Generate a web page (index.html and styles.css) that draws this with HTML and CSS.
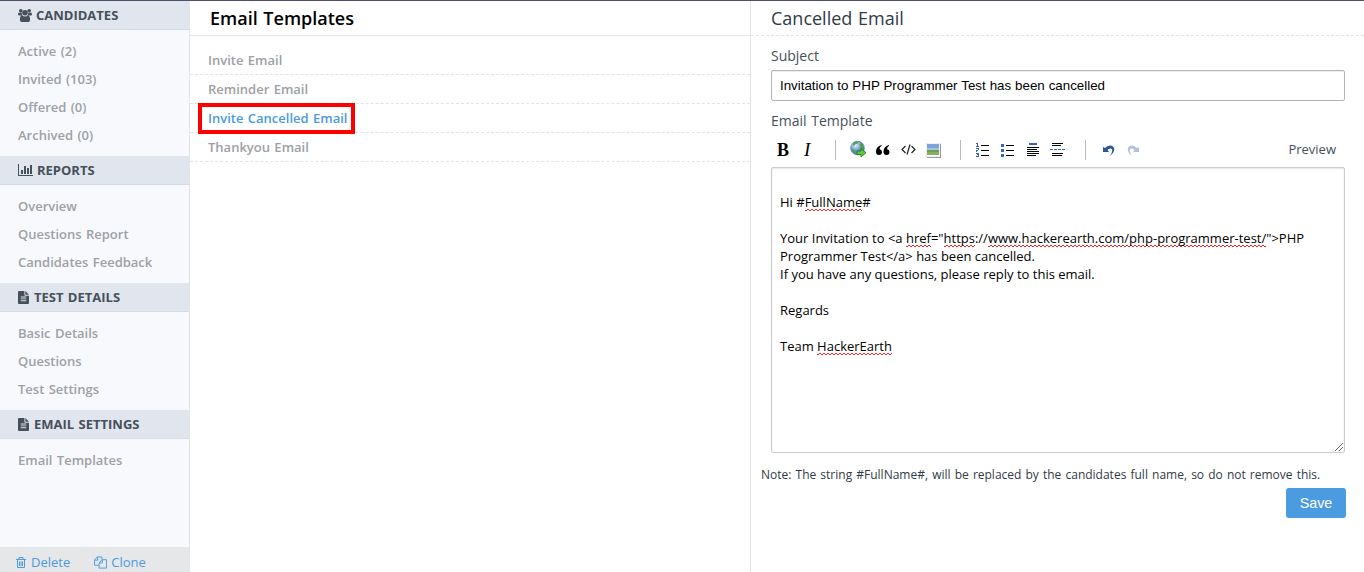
FILE: index.html
```html
<!DOCTYPE html>
<html lang="en">
<head>
<meta charset="utf-8">
<title>Email Templates</title>
<link rel="stylesheet" href="styles.css">
</head>
<body>
<svg class="defs" width="0" height="0" aria-hidden="true">
  <symbol id="file" viewBox="0 0 12 14"><path fill="currentColor" fill-rule="evenodd" d="M0 1Q0 0 1 0H7V4Q7 5 8 5H12V13Q12 14 11 14H1Q0 14 0 13ZM8 0L12 4H8ZM3 6V7H9V6ZM3 8V9H9V8ZM3 10V11H9V10Z"/></symbol>
</svg>
<div class="app">
  <aside class="sidebar">
    <h3 class="group"><svg class="ico-users" width="14" height="13" viewBox="0 0 15 14" fill="currentColor"><circle cx="3" cy="2" r="2"/><circle cx="12" cy="2" r="2"/><circle cx="7.5" cy="4" r="3"/><path d="M0 6Q0 3.8 1 3.8Q2.5 4.8 4 4.2Q4 6 5 7H1.2Q0 7 0 6ZM15 6Q15 3.8 14 3.8Q12.500 4.800 11 4.200Q11 6 10 7H13.800Q15 7 15 6ZM2 11.500Q2 7 4.500 7Q7.500 9.400 10.500 7Q13 7 13 11.500Q13 14 11 14H4Q2 14 2 11.500Z"/></svg><span>CANDIDATES</span></h3>
    <nav class="links"><a>Active (2)</a><a>Invited (103)</a><a>Offered (0)</a><a>Archived (0)</a></nav>
    <h3 class="group"><svg class="ico-chart" width="15" height="12" viewBox="0 0 15 12" fill="currentColor"><path d="M0 0H1V11H15V12H0ZM3 6H5V10H3ZM6 2H8V10H6ZM9 4H11V10H9ZM12 1H14V10H12Z"/></svg><span>REPORTS</span></h3>
    <nav class="links"><a>Overview</a><a>Questions Report</a><a>Candidates Feedback</a></nav>
    <h3 class="group"><svg class="ico-file" width="11" height="13"><use href="#file"/></svg><span>TEST DETAILS</span></h3>
    <nav class="links"><a>Basic Details</a><a>Questions</a><a>Test Settings</a></nav>
    <h3 class="group"><svg class="ico-file" width="11" height="13"><use href="#file"/></svg><span>EMAIL SETTINGS</span></h3>
    <nav class="links"><a>Email Templates</a></nav>
    <footer class="actions">
      <a><svg width="10" height="11" viewBox="0 0 10 11" fill="none" stroke="currentColor"><path d="M0 2.500H10M3 2V.5H7V2M1.500 3V10.500H8.500V3M3.500 4.500V9M5 4.500V9M6.500 4.500V9"/></svg><span>Delete</span></a>
      <a><svg width="13" height="13" viewBox="0 0 14 13" fill="none" stroke="currentColor"><path d="M5.500 9.500H.5V4L3.500.5H8.500V3M4 .5V4H.5M5.500 7L8.500 3.500H13.500V12.500H5.500ZM9 3.500V7H5.500"/></svg><span>Clone</span></a>
    </footer>
  </aside>
  <main class="templates">
    <h1>Email Templates</h1>
    <ul><li>Invite Email</li><li>Reminder Email</li><li class="current"><span>Invite Cancelled Email</span></li><li>Thankyou Email</li></ul>
  </main>
  <section class="editor">
    <h2>Cancelled Email</h2>
    <div class="form">
      <label class="subject">Subject</label>
      <div class="input">Invitation to PHP Programmer Test has been cancelled</div>
      <label class="template">Email Template</label>
      <div class="toolbar">
        <b class="bold">B</b><i class="italic">I</i><span class="sep s1"></span>
        <svg class="globe" width="17" height="17" viewBox="0 0 17 17"><defs><radialGradient id="g" cx=".35" cy=".3"><stop stop-color="#e5f2ff"/><stop offset="1" stop-color="#4f83bd"/></radialGradient></defs><circle cx="7.500" cy="7" r="6.800" fill="url(#g)" stroke="#4e7fae" stroke-width=".8"/><path fill="#4ca53a" d="M3 2.500Q5 0 8 .8L7.500 2.500L5 3.500L3.500 5.500ZM10 3L12 2.500L14 6L13 8L10.500 6.500ZM2 8L5 9L6 12L4 12Z"/><path fill="#62c43b" stroke="#267a1e" stroke-width=".9" d="M7 10H11V7.500L16 11.700L11 16V13.500H7Z"/></svg>
        <svg class="quote" width="14" height="10" viewBox="0 0 14 10"><path d="M5.500 0Q0 1.500 0 6.500Q0 10 3 10Q6 10 6 7Q6 4.500 3.500 4.300Q3.300 2 5.700.7Z"/><path transform="translate(7.500)" d="M5.500 0Q0 1.500 0 6.500Q0 10 3 10Q6 10 6 7Q6 4.500 3.500 4.300Q3.300 2 5.700.7Z"/></svg>
        <svg class="code" width="15" height="11" viewBox="0 0 15 11" fill="none" stroke="#222" stroke-width="1.200"><path d="M4.500 2L1 5.500L4.500 9M10.500 2L14 5.500L10.500 9M9 .5L6 10.500"/></svg>
        <svg class="image" width="15" height="15" viewBox="0 0 15 15"><path fill="#888" d="M1 1H15V15H1Z"/><path fill="#fff" stroke="#ccc" stroke-width=".5" d="M.2.2H14V14H.2Z"/><path fill="#7ca4dc" d="M1 1H13V7H1Z"/><path fill="#a9c6d9" d="M1 5H13V7H1Z"/><path fill="#84b062" d="M1 7H13V12H1Z"/><path fill="#6f9d58" d="M1 7H13V9H1Z"/></svg>
        <span class="sep s2"></span>
        <svg class="ol" width="14" height="15" viewBox="0 0 14 15" shape-rendering="crispEdges"><path d="M5 2H13V3H5ZM5 7H13V8H5ZM5 12H13V13H5Z"/><path fill="#3465c0" d="M0 0H2V3H3V4H0V3H1V1H0ZM0 5H3V7H2V8H1V8.500H3V9H0V7H1V7H2V6H0ZM0 10H3V14H0V13H2V12H1V11H0Z"/></svg>
        <svg class="ulist" width="13" height="13" viewBox="0 0 13 13" shape-rendering="crispEdges"><path d="M5 1H13V2H5ZM5 6H13V7H5ZM5 11H13V12H5Z"/><path fill="#3465c0" d="M0 0H3V3H0ZM0 5H3V8H0ZM0 10H3V13H0Z"/></svg>
        <svg class="head" width="12" height="13" viewBox="0 0 12 13" shape-rendering="crispEdges"><path fill="#3465c0" d="M2 0H10V2H2Z"/><path d="M0 4H12V5H0ZM0 6H10V7H0ZM0 8H12V9H0ZM0 10H12V11H0ZM0 12H9V13H0Z"/></svg>
        <svg class="rule" width="15" height="13" viewBox="0 0 15 13" shape-rendering="crispEdges"><path d="M2 0H13V1H2ZM2 2H11V3H2ZM2 10H13V11H2ZM2 12H12V13H2Z"/><path fill="#3465c0" d="M0 6H3V7H0ZM4 6H7V7H4ZM8 6H11V7H8ZM12 6H15V7H12Z"/></svg>
        <span class="sep s3"></span>
        <svg class="undo" width="12" height="12" viewBox="0 0 12 12"><path fill="#2b569c" d="M0 2L2 3Q5-.5 9 .8Q13 3 10 8L7 11Q11 5 8 3.500Q6 3 4.500 5L6 7H0Z"/></svg>
        <svg class="redo" width="12" height="12" viewBox="0 0 12 12"><path transform="matrix(-1 0 0 1 12 0)" fill="#b2c1dc" d="M0 2L2 3Q5-.5 9 .8Q13 3 10 8L7 11Q11 5 8 3.500Q6 3 4.500 5L6 7H0Z"/></svg>
        <a class="preview">Preview</a>
      </div>
      <div class="textarea">
        <p>Hi #<u>FullName</u>#</p>
        <p>Your Invitation to &lt;a <u>href</u>="<u>https</u>://<u>www.hackerearth.com/php-programmer-test/</u>"&gt;PHP<br>Programmer Test&lt;/a&gt; has been cancelled.<br>If you have any questions, please reply to this email.</p>
        <p>Regards</p>
        <p>Team <u>HackerEarth</u></p>
        <svg class="grip" width="8" height="8" viewBox="0 0 8 8" stroke="#555" stroke-width=".9"><path d="M0 8L8 0M4 8L8 4"/></svg>
      </div>
    </div>
    <p class="note">Note: The string #FullName#, will be replaced by the candidates full name, so do not remove this.</p>
    <a class="save">Save</a>
  </section>
</div>
</body>
</html>
```
FILE: styles.css
```css
* { box-sizing: border-box; }
body, h1, h2, h3, ul, p { margin: 0; padding: 0; }
body { font-family: "Open Sans", "Noto Sans", sans-serif; font-size: 13px; color: #2f3b46; background: #fff; }
.defs { position: absolute; }
svg { display: block; flex: none; }
.app { display: grid; grid-template-columns: 190px 560px 614px; height: 572px; border-top: 1px solid #50506e; }
.sidebar { display: flex; flex-direction: column; background: #f8f9fd; border-right: 1px solid #e4e5e9; }
.group { display: flex; align-items: center; height: 29px; padding-left: 18px; background: #e1e5ed; border-bottom: 1px solid #d5daea; font-size: 13px; font-weight: 700; color: #46505b; white-space: nowrap; word-spacing: 1px; }
.group span { margin-left: 4px; }
.group .ico-file + span { margin-left: 5px; }
.links { padding: 7px 0 7px 18px; }
.links a { display: block; height: 28px; line-height: 28px; font-weight: 600; color: #9da1a5; word-spacing: 1px; }
.actions { display: flex; align-items: center; gap: 24px; height: 25px; margin-top: auto; padding: 6px 0 0 16px; background: #e5e7e9; color: #4b9be0; font-size: 13px; line-height: 19px; }
.actions a { display: flex; align-items: center; gap: 4px; }
.actions a:first-child span { margin-left: 1px; }
.templates h1 { height: 35px; padding-left: 20px; border-bottom: 1px solid #e4e5e7; font-size: 18px; line-height: 35px; font-weight: 600; color: #000; word-spacing: 1px; }
.templates ul { padding-top: 10px; list-style: none; }
.templates li { height: 29px; padding-left: 18px; border-bottom: 1px dashed #e2e3e5; line-height: 29px; font-weight: 600; color: #9da1a5; word-spacing: 1px; }
.templates .current { padding-left: 8px; color: #4b9be0; }
.current span { display: block; position: relative; top: -1px; width: 157px; height: 31px; padding-left: 6px; border: 4px solid #f00; line-height: 23px; white-space: nowrap; }
.editor { border-left: 1px solid #e4e5e7; }
.editor h2 { height: 35px; padding-left: 20px; border-bottom: 1px dashed #e2e3e5; font-size: 18px; line-height: 35px; font-weight: 400; word-spacing: 1px; }
.form { padding: 9px 19px 0 20px; }
label { display: block; font-size: 14px; color: #46505b; word-spacing: 1px; }
.subject { height: 25px; line-height: 22px; }
.input { height: 31px; padding-left: 8px; border: 1px solid #b5b5b5; border-radius: 2px; box-shadow: inset 0 1px 1px #eee; color: #000; font: 13.333px/29px "Liberation Sans", sans-serif; word-spacing: .25px; }
.template { height: 36px; line-height: 40px; }
.toolbar { display: flex; height: 30px; align-items: flex-start; padding-top: 2px; }
.toolbar > * { flex: none; }
.bold, .italic { font: bold 18px/22px "Liberation Serif", serif; color: #000; }
.bold { width: 12px; margin-left: 6px; }
.italic { width: 8px; margin-left: 15px; font-style: italic; font-weight: 400; font-size: 19px; }
.sep { width: 1px; height: 20px; background: #bbb; margin-top: 1px; }
.s1 { margin-left: 23px; }
.globe { margin: 2px 0 0 14px; }
.quote { margin: 6px 0 0 9px; }
.code { margin: 5px 0 0 11px; }
.image { margin: 4px 0 0 10px; }
.s2 { margin-left: 19px; }
.ol { margin: 4px 0 0 15px; }
.ulist { margin: 5px 0 0 11px; }
.head { margin: 4px 0 0 13px; }
.rule { margin: 4px 0 0 11px; }
.s3 { margin-left: 20px; }
.undo { margin: 6px 0 0 17px; }
.redo { margin: 6px 0 0 12px; }
.preview { margin-left: auto; padding-right: 9px; line-height: 21px; color: #46505b; }
.textarea { position: relative; height: 286px; padding: 25px 8px; border: 1px solid #ccc; border-radius: 2px; box-shadow: inset 0 1px 2px #e5e5e5; line-height: 18px; color: #000; white-space: nowrap; }
.textarea p + p { margin-top: 18px; }
.textarea u { text-decoration: none; background: linear-gradient(90deg, #e22 2px, transparent 2px) 0 100% / 4px 1px repeat-x, linear-gradient(90deg, #e22 2px, transparent 2px) 2px calc(100% - 1px) / 4px 1px repeat-x; }
.grip { position: absolute; right: 1px; bottom: 1px; }
.note { margin-top: 13px; padding-left: 10px; font-size: 12px; line-height: 17px; word-spacing: 1px; white-space: nowrap; }
.save { display: block; width: 60px; height: 30px; margin: 5px 18px 0 auto; border-radius: 3px; background: #4b9be0; color: #fff; text-align: center; font: 14.3px/30px "Liberation Sans", sans-serif; }
```
